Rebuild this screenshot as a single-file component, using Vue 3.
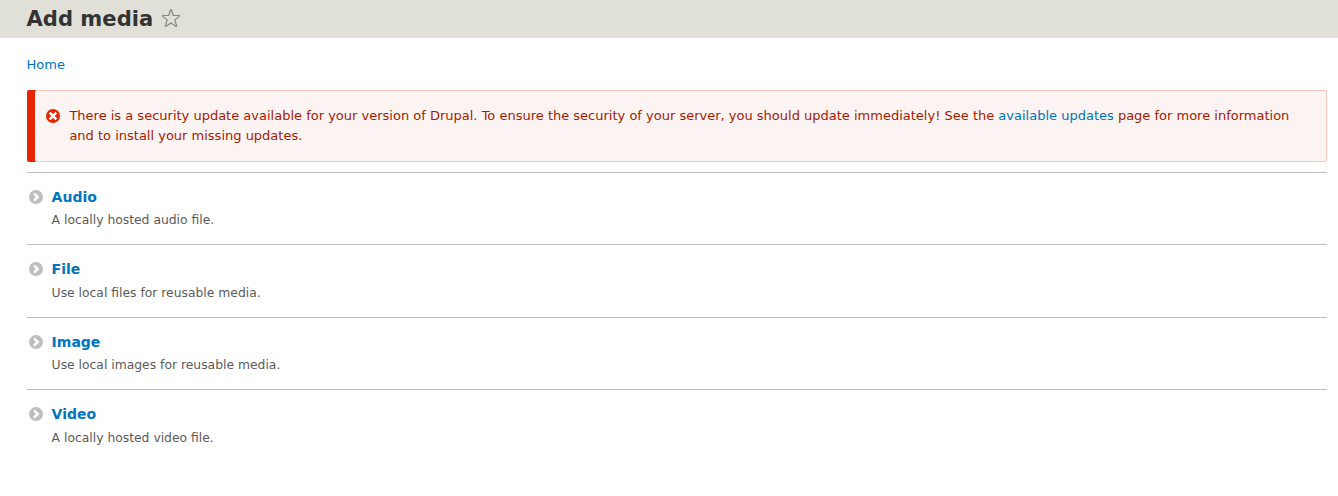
<script setup>
const types = [
  { name: 'Audio', text: 'A locally hosted audio file.' },
  { name: 'File', text: 'Use local files for reusable media.' },
  { name: 'Image', text: 'Use local images for reusable media.' },
  { name: 'Video', text: 'A locally hosted video file.' },
]
</script>

<template>
  <header class="header">
    <h1>Add media</h1>
    <svg class="star" width="20" height="20" viewBox="0 0 20 20">
      <path d="M9.5 2.1Q10 1 10.5 2.1L12.3 7.5H18Q19.2 7.6 18.3 8.4L13.8 11.9 15.5 17.4Q15.7 18.7 14.6 18.1L10 14.9 5.4 18.1Q4.3 18.7 4.5 17.4L6.2 11.9 1.7 8.4Q.8 7.6 2 7.5H7.7Z" fill="none" stroke="#87887a" stroke-width="1.2" stroke-linejoin="round" />
    </svg>
  </header>
  <main class="page">
    <nav class="crumb"><a>Home</a></nav>
    <div class="message">
      <svg class="err" width="16" height="16" viewBox="0 0 16 16">
        <circle cx="8" cy="8" r="7" fill="#e62600" />
        <path d="M4.7 4.7 11.3 11.3M11.3 4.7 4.7 11.3" stroke="#fff" stroke-width="2.5" />
      </svg>
      <p>There is a security update available for your version of Drupal. To ensure the security of your server, you should update immediately! See the <a>available updates</a> page for more information and to install your missing updates.</p>
    </div>
    <ul class="list">
      <li v-for="t in types" :key="t.name">
        <svg class="chev" width="16" height="16" viewBox="0 0 16 16">
          <circle cx="8" cy="8" r="7" fill="#bebebe" />
          <path d="M6.1 4.4 9.7 8 6.1 11.6" fill="none" stroke="#fff" stroke-width="2.5" />
        </svg>
        <div>
          <a class="name">{{ t.name }}</a>
          <div class="desc">{{ t.text }}</div>
        </div>
      </li>
    </ul>
  </main>
</template>

<style>
body { margin: 0; background: #fff; }
</style>

<style scoped>
.header, .page { font-family: "DejaVu Sans", sans-serif; font-size: 13px; }
.header { box-sizing: border-box; height: 38px; background: #e0e0d8; display: flex; align-items: flex-start; padding-left: 26.5px; }
h1 { margin: 0; font-size: 21.1px; line-height: 37px; font-weight: bold; color: #333; }
.star { margin: 8px 0 0 7.5px; }
a { color: #0074bd; }
.page { padding: 0 11px 0 27px; }
.crumb { line-height: 20px; padding: 17px 0 15px; margin-left: -0.5px; }
.message { box-sizing: border-box; height: 72px; margin-left: 8px; border: 1px solid #f9c9bf; border-left: 0; border-radius: 2px; box-shadow: -8px 0 0 #e62600; background: #fcf4f2; color: #a51b00; display: flex; padding: 15px 20px 0 10px; }
.err { flex: none; margin: 2px 8.4px 0 0; }
p { margin: 0; line-height: 20px; }
.list { list-style: none; margin: 10px 0 0; padding: 0; }
li { box-sizing: border-box; height: 72.4px; border-top: 1px solid #bfbfbf; display: flex; padding-top: 13px; }
.chev { flex: none; margin: 3px 7.6px 0 1px; }
.name { display: block; font-size: 14px; font-weight: bold; line-height: 22px; }
.desc { font-size: 12.35px; line-height: 20px; color: #5b5b5b; margin-top: 2.42px; }
</style>
